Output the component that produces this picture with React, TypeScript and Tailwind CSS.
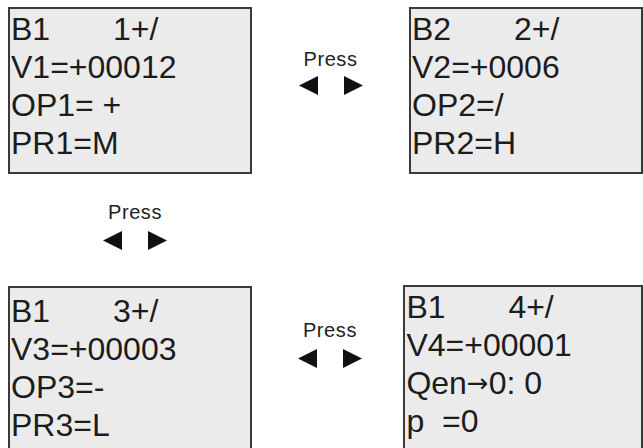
import React from "react";

type Screen = {
  head: string;
  tag: string;
  lines: React.ReactNode[];
};

function Lcd({ screen, className }: { screen: Screen; className: string }) {
  return (
    <div
      className={`bg-[#ebebeb] border-2 border-[#3a3a3a] pl-[1px] text-[32px] leading-[38px] text-[#1c1c1c] whitespace-pre ${className}`}
    >
      <div className="flex">
        <span className="w-[102px]">{screen.head}</span>
        <span>{screen.tag}</span>
      </div>
      {screen.lines.map((l, i) => (
        <div key={i}>{l}</div>
      ))}
    </div>
  );
}

function Press({ className, gap }: { className: string; gap: string }) {
  return (
    <div className={`flex flex-col items-center text-[#222] ${className}`}>
      <span className="text-[20px] leading-[20px] tracking-[0.6px]">Press</span>
      <div className={`flex gap-[26px] ${gap}`}>
        <svg width="19" height="19" viewBox="0 0 19 19" aria-hidden="true">
          <polygon points="0,9.5 19,0 19,19" fill="#111" />
        </svg>
        <svg width="19" height="19" viewBox="0 0 19 19" aria-hidden="true">
          <polygon points="19,9.5 0,0 0,19" fill="#111" />
        </svg>
      </div>
    </div>
  );
}

const s1: Screen = {
  head: "B1",
  tag: "1+/",
  lines: ["V1=+00012", "OP1= +", "PR1=M"],
};
const s2: Screen = {
  head: "B2",
  tag: "2+/",
  lines: ["V2=+0006", "OP2=/", "PR2=H"],
};
const s3: Screen = {
  head: "B1",
  tag: "3+/",
  lines: ["V3=+00003", "OP3=-", "PR3=L"],
};
const s4: Screen = {
  head: "B1",
  tag: "4+/",
  lines: [
    "V4=+00001",
    <>
      Qen
      <span
        className="text-[26px] align-[2px]"
        style={{ fontFamily: '"DejaVu Sans", sans-serif' }}
      >
        →
      </span>
      0: 0
    </>,
    "p  =0",
  ],
};

export default function App() {
  return (
    <div
      className="w-[643px] h-[448px] overflow-hidden bg-white"
      style={{ fontFamily: '"Liberation Sans", Arial, sans-serif' }}
    >
      <div className="flex pt-[7px] pl-[8px]">
        <Lcd screen={s1} className="w-[244px] h-[167px] pt-[1px]" />
        <Press className="w-[157px] pt-[42px]" gap="mt-[7px]" />
        <Lcd screen={s2} className="w-[234px] h-[167px] pt-[1px]" />
      </div>
      <div className="h-[111px] pl-[8px]">
        <Press className="w-[254px] pt-[28px]" gap="mt-[9px]" />
      </div>
      <div className="flex pl-[8px]">
        <Lcd screen={s3} className="w-[244px] h-[170px] mt-[1px] pt-[4px]" />
        <Press className="w-[152px] pl-[5px] pt-[35px]" gap="mt-[9px]" />
        <Lcd screen={s4} className="w-[240px] h-[170px] pt-[1px]" />
      </div>
    </div>
  );
}
